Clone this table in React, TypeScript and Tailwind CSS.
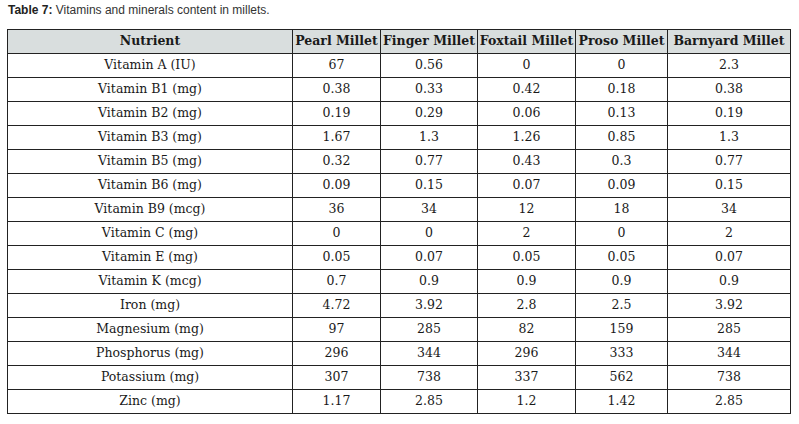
import React from 'react';

const headers = ['Nutrient', 'Pearl Millet', 'Finger Millet', 'Foxtail Millet', 'Proso Millet', 'Barnyard Millet'];

const rows: string[][] = [
  ['Vitamin A (IU)', '67', '0.56', '0', '0', '2.3'],
  ['Vitamin B1 (mg)', '0.38', '0.33', '0.42', '0.18', '0.38'],
  ['Vitamin B2 (mg)', '0.19', '0.29', '0.06', '0.13', '0.19'],
  ['Vitamin B3 (mg)', '1.67', '1.3', '1.26', '0.85', '1.3'],
  ['Vitamin B5 (mg)', '0.32', '0.77', '0.43', '0.3', '0.77'],
  ['Vitamin B6 (mg)', '0.09', '0.15', '0.07', '0.09', '0.15'],
  ['Vitamin B9 (mcg)', '36', '34', '12', '18', '34'],
  ['Vitamin C (mg)', '0', '0', '2', '0', '2'],
  ['Vitamin E (mg)', '0.05', '0.07', '0.05', '0.05', '0.07'],
  ['Vitamin K (mcg)', '0.7', '0.9', '0.9', '0.9', '0.9'],
  ['Iron (mg)', '4.72', '3.92', '2.8', '2.5', '3.92'],
  ['Magnesium (mg)', '97', '285', '82', '159', '285'],
  ['Phosphorus (mg)', '296', '344', '296', '333', '344'],
  ['Potassium (mg)', '307', '738', '337', '562', '738'],
  ['Zinc (mg)', '1.17', '2.85', '1.2', '1.42', '2.85'],
];

const colWidths = ['w-[285px]', 'w-[88px]', 'w-[97px]', 'w-[98px]', 'w-[92px]', 'w-[123px]'];

const App: React.FC = () => {
  return (
    <div className="w-[799px] h-[424px] bg-white px-[7px] pt-[2px]">
      <p className="font-['Liberation_Sans',Arial,sans-serif] text-[12px] leading-[16px] text-[#333] pl-[1px]">
        <span className="font-bold text-[#222]">Table 7:</span> Vitamins and minerals content in millets.
      </p>

      <table className="mt-[11px] border-collapse table-fixed w-[784px] font-['DejaVu_Serif',serif] text-[12.5px] text-[#1a1a1a]">
        <colgroup>
          {colWidths.map((w, i) => (
            <col key={i} className={w} />
          ))}
        </colgroup>
        <thead>
          <tr className="bg-[#d9dede] h-[24px]">
            {headers.map((h) => (
              <th key={h} className="border border-[#222] font-bold text-center px-0 py-0 whitespace-nowrap">
                {h}
              </th>
            ))}
          </tr>
        </thead>
        <tbody>
          {rows.map((r, i) => (
            <tr key={i} className="h-[24px]">
              {r.map((c, j) => (
                <td key={j} className="border border-[#222] text-center p-0 whitespace-nowrap">
                  {c}
                </td>
              ))}
            </tr>
          ))}
        </tbody>
      </table>
    </div>
  );
};

export default App;
